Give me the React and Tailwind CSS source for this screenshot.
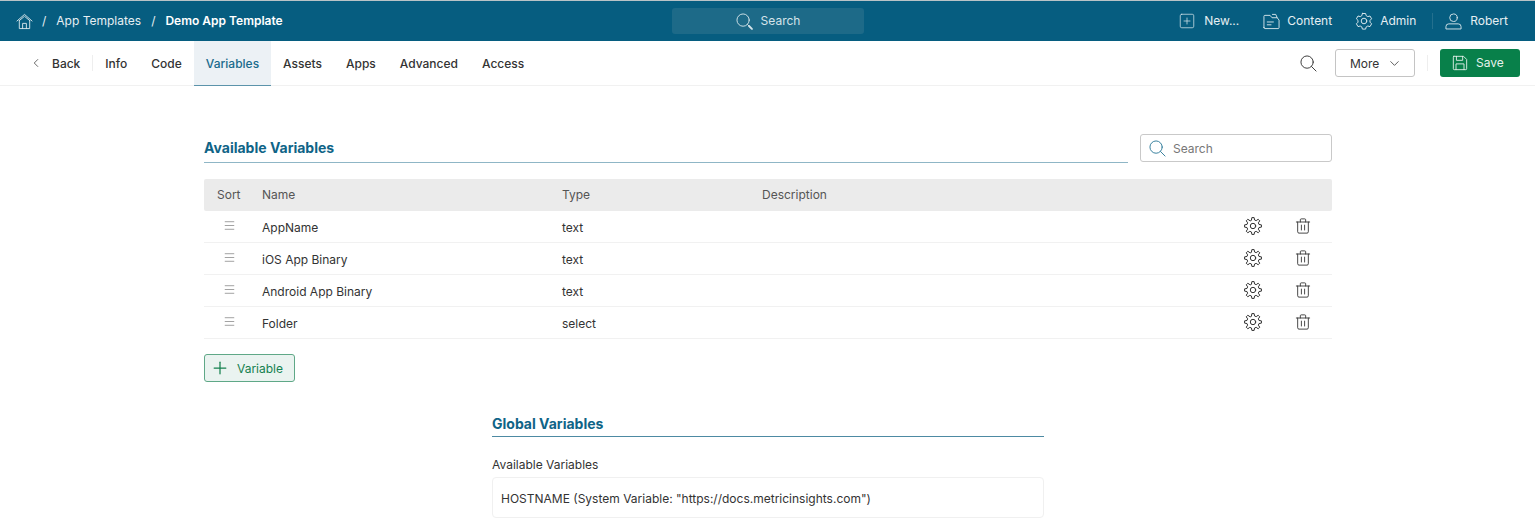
import { ChevronDown, ChevronLeft, Menu, Plus, SquarePlus } from 'lucide-react';

const tabs = ['Info', 'Code', 'Variables', 'Assets', 'Apps', 'Advanced', 'Access'];

const variables = [
    { name: 'AppName', type: 'text' },
    { name: 'iOS App Binary', type: 'text' },
    { name: 'Android App Binary', type: 'text' },
    { name: 'Folder', type: 'select' },
];

// outline of a gear with eight square-ish teeth
function gearPath(teeth, outer, inner) {
    const step = (Math.PI * 2) / teeth;
    const points = [];
    for (let i = 0; i < teeth; i++) {
        const a = i * step;
        [
            [a - step * 0.32, inner],
            [a - step * 0.17, outer],
            [a + step * 0.17, outer],
            [a + step * 0.32, inner],
        ].forEach(([angle, r]) => {
            points.push(`${(9 + Math.sin(angle) * r).toFixed(2)} ${(9 - Math.cos(angle) * r).toFixed(2)}`);
        });
    }
    return `M${points.join('L')}Z`;
}

const TABLE_GEAR = gearPath(8, 8.5, 6.2);

function Icon({ size = 18, className = '', strokeWidth = 1, children }) {
    return (
        <svg
            width={size}
            height={size}
            viewBox="0 0 18 18"
            fill="none"
            stroke="currentColor"
            strokeWidth={strokeWidth}
            strokeLinecap="round"
            strokeLinejoin="round"
            className={`shrink-0 ${className}`}
        >
            {children}
        </svg>
    );
}

const HomeIcon = (props) => (
    <Icon {...props}>
        <path d="M1 8.5 9 1.5l8 7" />
        <path d="M3.5 8 9 3.5 14.5 8" />
        <path d="M3.5 8v8.5h11V8" />
        <path d="M7 16.5V11h4v5.5" />
    </Icon>
);

const SearchIcon = ({ thickHandle, ...props }) => (
    <Icon {...props}>
        <circle cx="7.5" cy="7.5" r="6.5" />
        <path d="m12.2 12.2 4.8 4.8" />
        {thickHandle && <path d="m13.8 13.8 3 3" strokeWidth="2" />}
    </Icon>
);

const FolderIcon = (props) => (
    <Icon {...props}>
        <path d="M1 15.5V3.5a1 1 0 0 1 1-1h5.5L9.5 5h5.5l2 2.5v8a1 1 0 0 1-1 1H2a1 1 0 0 1-1-1Z" />
        <path d="M10 1.5h3.5L15 5" />
        <path d="M4.5 9.5h6.5M4.5 12.5h4" />
    </Icon>
);

const AdminGearIcon = (props) => (
    <Icon {...props}>
        <path d="M7.4 1.5h3.2l.6 2.2 1.6.9 2.2-.6 1.6 2.8-1.6 1.6v1.8l1.6 1.6-1.6 2.8-2.2-.6-1.6.9-.6 2.2H7.4l-.6-2.2-1.6-.9-2.2.6-1.6-2.8 1.6-1.6V8.4L1.4 6.8 3 4l2.2.6 1.6-.9.6-2.2Z" />
        <circle cx="9" cy="9" r="2.8" />
    </Icon>
);

const TableGearIcon = (props) => (
    <Icon {...props}>
        <path d={TABLE_GEAR} />
        <circle cx="9" cy="9" r="2.7" />
    </Icon>
);

const UserIcon = (props) => (
    <Icon {...props}>
        <circle cx="9" cy="5" r="4" />
        <path d="M1 16.5v-2a3 3 0 0 1 3-3h10a3 3 0 0 1 3 3v2Z" />
    </Icon>
);

const TrashIcon = (props) => (
    <Icon {...props}>
        <path d="M1.5 4.5h15" />
        <path d="M6 4.5V2a1 1 0 0 1 1-1h4a1 1 0 0 1 1 1v2.5" />
        <path d="M3 4.5V15.5a1.5 1.5 0 0 0 1.5 1.5h9a1.5 1.5 0 0 0 1.5-1.5V4.5" />
        <path d="M7.2 8v5.5M10.8 8v5.5" />
    </Icon>
);

const SaveIcon = (props) => (
    <Icon {...props}>
        <path d="M2 1.5h11l3.5 3.5v10.5a1 1 0 0 1-1 1h-13a1 1 0 0 1-1-1v-13a1 1 0 0 1 .5-1Z" />
        <path d="M5 1.5v4.5h7V1.5" />
        <path d="M4.5 16.5V10h9v6.5" />
    </Icon>
);

function TopBar() {
    return (
        <header className="flex h-[41px] items-center border-t border-t-[#b9c3c7] bg-[#065d80] pl-[16px] pr-[27px] text-[12px] text-[#e6eff3]">
            <div className="flex w-[656px] items-center">
                <HomeIcon size={17} className="text-[#d5e4ea]" />
                <span className="ml-[9px]">/</span>
                <span className="ml-[10px]">App Templates</span>
                <span className="ml-[10px]">/</span>
                <span className="ml-[10px] font-semibold text-white">Demo App Template</span>
            </div>
            <div className="flex h-[26px] w-[192px] items-center justify-center gap-[8px] rounded-[3px] bg-[#1d6a88] text-[#d5e4ea]">
                <SearchIcon size={17} thickHandle />
                <span>Search</span>
            </div>
            <div className="ml-auto flex items-center">
                <div className="flex items-center gap-[8px]">
                    <SquarePlus size={18} strokeWidth={1} className="text-[#d5e4ea]" />
                    <span>New...</span>
                </div>
                <div className="ml-[24px] flex items-center gap-[7px]">
                    <FolderIcon size={17} className="text-[#d5e4ea]" />
                    <span>Content</span>
                </div>
                <div className="ml-[23px] flex items-center gap-[7px]">
                    <AdminGearIcon size={18} className="text-[#d5e4ea]" />
                    <span>Admin</span>
                </div>
                <div className="ml-[16px] mr-[12px] h-[16px] w-px bg-[#24708e]" />
                <div className="flex items-center gap-[8px]">
                    <UserIcon size={17} className="text-[#d5e4ea]" />
                    <span>Robert</span>
                </div>
            </div>
        </header>
    );
}

function TabBar() {
    return (
        <nav className="flex h-[45px] items-center border-b border-b-[#f1f1f1] pl-[29px] pr-[15px] text-[12px] font-medium text-[#333]">
            <ChevronLeft size={14} strokeWidth={1.25} />
            <span className="ml-[9px] pt-[2px]">Back</span>
            <div className="ml-[12px] h-[16px] w-px bg-[#eee]" />
            <div className="ml-[12px] flex h-full items-stretch">
                {tabs.map((tab) => (
                    <div
                        key={tab}
                        className={
                            tab === 'Variables'
                                ? 'flex -mb-px items-center border-b border-b-[#5b93aa] bg-[#ecf1f5] px-[12px] pt-[2px] text-[#1a6b8c]'
                                : 'flex items-center px-[12px] pt-[2px] first:pl-0'
                        }
                    >
                        {tab}
                    </div>
                ))}
            </div>
            <SearchIcon size={17} className="ml-auto text-[#333]" />
            <button className="ml-[18px] flex h-[28px] w-[80px] items-center gap-[8px] rounded-[3px] border border-[#c4c4c4] pl-[14px] pt-[1px] font-normal text-[#333]">
                More
                <ChevronDown size={15} strokeWidth={1.25} />
            </button>
            <div className="ml-[12px] h-[16px] w-px bg-[#eee]" />
            <button className="ml-[12px] flex h-[28px] w-[80px] items-center gap-[8px] rounded-[3px] bg-[#08804a] pl-[12px] font-normal text-[#e6f2ec]">
                <SaveIcon size={16} />
                Save
            </button>
        </nav>
    );
}

function VariablesTable() {
    return (
        <div className="mt-[16px] text-[12px] text-[#333]">
            <div className="flex h-[32px] items-center rounded-[2px] bg-[#ebebeb] pl-[13px] text-[#555]">
                <span className="w-[45px]">Sort</span>
                <span className="w-[300px]">Name</span>
                <span className="w-[200px]">Type</span>
                <span>Description</span>
            </div>
            {variables.map((row) => (
                <div key={row.name} className="flex h-[32px] items-center border-b border-b-[#f1f1f1] pl-[19px]">
                    <Menu size={13} strokeWidth={1.25} className="-mt-[3px] w-[13px] text-[#777]" />
                    <span className="ml-[26px] w-[300px] pt-[2px]">{row.name}</span>
                    <span className="pt-[2px]">{row.type}</span>
                    <TableGearIcon size={18} className="-mt-[1px] ml-auto text-[#333]" />
                    <TrashIcon size={16} className="-mt-[1px] ml-[33px] mr-[21px] text-[#333]" />
                </div>
            ))}
        </div>
    );
}

export default function App() {
    return (
        <div className="h-[528px] overflow-hidden bg-white font-['Inter',sans-serif]">
            <TopBar />
            <TabBar />
            <main className="ml-[204px] w-[1128px] pt-[48px]">
                <div className="flex items-start gap-[12px]">
                    <h2 className="flex h-[29px] flex-1 items-center border-b border-b-[#8fb6c6] pb-[2px] text-[14px] font-bold text-[#0f6487]">
                        Available Variables
                    </h2>
                    <div className="flex h-[28px] w-[192px] items-center gap-[7px] rounded-[3px] border border-[#c9c9c9] pl-[8px] text-[12px] text-[#777]">
                        <SearchIcon size={17} className="text-[#2f7a99]" />
                        <span className="pt-[1px]">Search</span>
                    </div>
                </div>
                <VariablesTable />
                <button className="mt-[15px] flex h-[28px] w-[91px] items-center gap-[7px] rounded-[3px] border border-[#5fa887] bg-[#eaf3f0] pl-[5px] text-[12px] text-[#15814f]">
                    <Plus size={20} strokeWidth={1.5} />
                    <span className="pt-[1px]">Variable</span>
                </button>
                <section className="mx-auto mt-[31px] w-[552px]">
                    <h2 className="flex h-[24px] items-center border-b border-b-[#4d8aa3] pb-[3px] text-[14px] font-bold text-[#0f6487]">
                        Global Variables
                    </h2>
                    <div className="mt-[19px] text-[12px] text-[#333]">Available Variables</div>
                    <div className="mt-[3px] flex h-[41px] items-center rounded-[4px] border border-[#f0f0f0] pl-[8px] pt-[2px] text-[12px] text-[#333]">
                        HOSTNAME (System Variable: "https://docs.metricinsights.com")
                    </div>
                </section>
            </main>
        </div>
    );
}
